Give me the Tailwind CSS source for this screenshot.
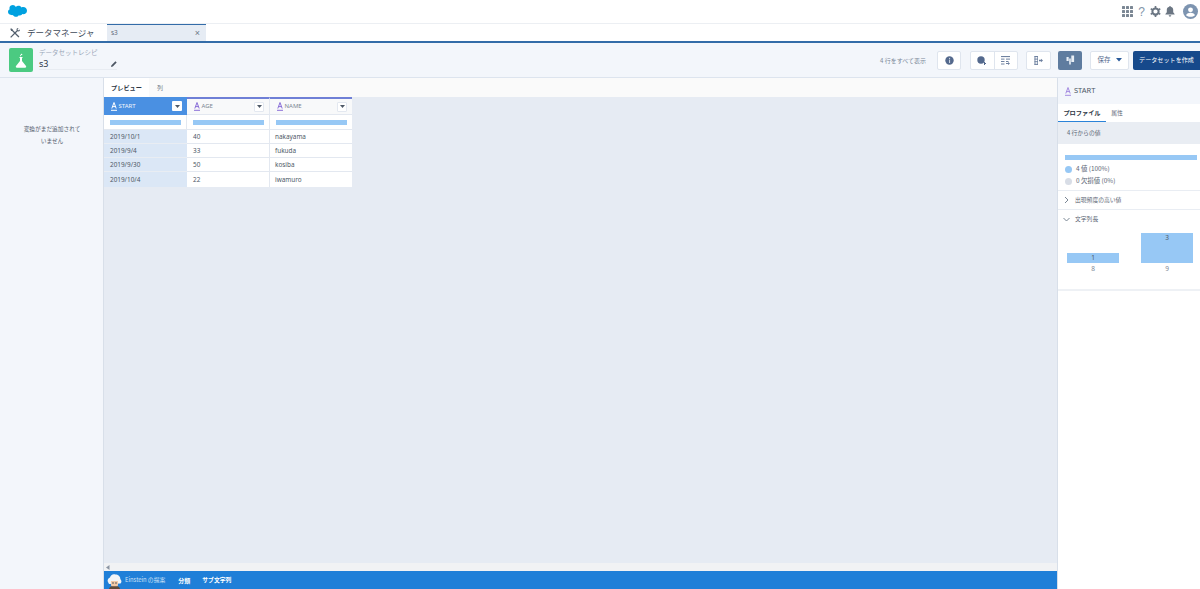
<!DOCTYPE html>
<html lang="ja">
<head>
<meta charset="utf-8">
<script src="https://cdn.jsdelivr.net/npm/@tailwindcss/browser@4"></script>
</head>
<body class="m-0 overflow-hidden bg-white font-['Noto_Sans_CJK_JP','Noto_Sans',sans-serif]">
<div class="flex h-[589px] w-[1200px] flex-col">
  <!-- global bar -->
  <header class="flex h-[24px] shrink-0 items-center justify-between border-b border-[#eceff3] bg-white pl-[8px] pr-[2px]">
    <svg width="19" height="13" viewBox="0 0 20 15" preserveAspectRatio="none"><path fill="#00a1e0" d="M8.200 2.200C8.900 1.300 9.900.8 11 .8c1.400 0 2.700.8 3.300 2 .6-.2 1.100-.4 1.700-.4 2.200 0 4 1.800 4 4.100s-1.800 4.100-4 4.100c-.3 0-.5 0-.8-.1-.5.9-1.500 1.500-2.600 1.500-.5 0-.9-.1-1.300-.3-.5 1.200-1.700 2-3 2-1.400 0-2.600-.9-3.100-2.100-.2 0-.4.100-.7.100C1.800 11.700 0 10.100 0 8.100c0-1.300.7-2.500 1.800-3.100-.2-.5-.3-1-.3-1.600C1.500 1.500 3.300 0 5.200 0c1.200 0 2.200.8 3 2.200z"/></svg>
    <div class="flex items-center">
      <svg class="mr-[5px]" width="11" height="11" viewBox="0 0 11 11" fill="#7b8794"><rect width="3" height="3" rx=".5"/><rect x="4" width="3" height="3" rx=".5"/><rect x="8" width="3" height="3" rx=".5"/><rect y="4" width="3" height="3" rx=".5"/><rect x="4" y="4" width="3" height="3" rx=".5"/><rect x="8" y="4" width="3" height="3" rx=".5"/><rect y="8" width="3" height="3" rx=".5"/><rect x="4" y="8" width="3" height="3" rx=".5"/><rect x="8" y="8" width="3" height="3" rx=".5"/></svg>
      <span class="mr-[5px] w-[7px] text-center font-['Liberation_Sans'] text-[12px] leading-[12px] text-[#8496ab]">?</span>
      <svg class="mr-[4px]" width="11" height="11" viewBox="0 0 12 12"><circle cx="6" cy="6" r="3.400" fill="none" stroke="#6b7683" stroke-width="2.200"/><path stroke="#6b7683" stroke-width="1.800" d="M6 0v2.400M6 9.600V12M.8 3l2.100 1.200M9.100 7.800 11.200 9M.8 9l2.100-1.200M9.100 4.200 11.200 3"/></svg>
      <svg class="mr-[8px]" width="10" height="11" viewBox="0 0 10 11" fill="#6b7683"><path d="M5 0c.5 0 .8.300.8.700C7.300 1 8.200 2.200 8.200 3.800v2.400L9.600 8v.6H.4V8l1.400-1.800V3.800C1.800 2.200 2.700 1 4.200.7 4.200.3 4.500 0 5 0zM3.700 9.300h2.600C6.200 10.200 5.700 10.700 5 10.700s-1.200-.5-1.300-1.400z"/></svg>
      <svg width="15" height="15" viewBox="0 0 16 16"><circle cx="8" cy="8" r="8" fill="#7d94b0"/><circle cx="8" cy="6.200" r="2.600" fill="#fff"/><path fill="#fff" d="M3.400 12.300c0-2 2-3 4.600-3s4.600 1 4.600 3c-1.200.9-2.800 1.300-4.600 1.300s-3.400-.4-4.600-1.300z"/></svg>
    </div>
  </header>

  <!-- app tabs -->
  <nav class="flex h-[19px] shrink-0 items-stretch border-b-2 border-[#336ca8] bg-white">
    <div class="flex w-[107px] items-center pl-[10px]">
      <svg class="mr-[7px] shrink-0" width="10" height="10" viewBox="0 0 10 10" fill="#54606e"><path d="M.2 8.900 6.800 2.300 6.400 1 7.800 0 8.500.6 7.400 1.700l.9.9 1.100-1.100.6.700-1 1.400-1.300-.4-6.600 6.600z"/><path d="M.3 1 1 .3l1.700 1 .1.800 6.600 6.500-.9.900L2 3.100l-.8-.1z"/></svg>
      <span class="text-[8.500px] leading-none whitespace-nowrap text-[#3e4958]">データマネージャ</span>
    </div>
    <div class="flex w-[99px] items-center justify-between border-t-[1.500px] border-[#336ca8] bg-[#e6ecf4] pl-[4px] pr-[6px]">
      <span class="font-['Noto_Sans'] text-[6.500px] text-[#5c6877]">s3</span>
      <span class="font-['Liberation_Sans'] text-[9px] leading-none text-[#6f7a88]">×</span>
    </div>
  </nav>

  <!-- page header -->
  <section class="flex h-[35px] shrink-0 items-center justify-between border-b border-[#dde4ee] bg-[#f3f6fb] pl-[9px]">
    <div class="flex items-center">
      <div class="flex h-[24px] w-[24px] items-center justify-center rounded-[2px] bg-[#4bca81]">
        <svg width="12" height="15" viewBox="0 0 12 15" fill="#fff"><path d="M4.500 4h3v.9h-.500v3.200L11 13c.5.800 0 1.700-.9 1.700H1.900C1 14.700.5 13.800 1 13l4-4.900V4.900h-.500z"/><circle cx="6.500" cy="1.500" r=".8"/><rect x="5" y="2.200" width="1" height="1"/></svg>
      </div>
      <div class="mb-[3px] ml-[6px] w-[78px] border-b border-[#e8ecf2]">
        <div class="text-[6.500px] leading-[11px] whitespace-nowrap text-[#9aa6b8]">データセットレシピ</div>
        <div class="flex h-[11px] items-center justify-between">
          <span class="font-['Noto_Sans'] text-[9px] leading-none text-[#2c3645]">s3</span>
          <svg width="6" height="6" viewBox="0 0 6 6" fill="#4c5663"><path d="M4.400.3 5.700 1.600 1.800 5.500 0 6 .5 4.200z"/></svg>
        </div>
      </div>
    </div>
    <div class="flex items-center">
      <span class="mr-[11px] text-[6px] whitespace-nowrap text-[#7b8899]">4 行をすべて表示</span>
      <div class="mr-[9px] flex h-[19px] w-[24px] items-center justify-center rounded-[2px] border border-[#dfe5ee] bg-white">
        <svg width="9" height="9" viewBox="0 0 9 9"><circle cx="4.500" cy="4.500" r="4.200" fill="#54698d"/><rect x="4" y="1.900" width="1.100" height="1.100" fill="#c9d3e0"/><rect x="4" y="3.600" width="1.100" height="3.400" fill="#c9d3e0"/></svg>
      </div>
      <div class="mr-[8px] flex h-[19px] w-[48px] rounded-[2px] border border-[#dfe5ee] bg-white">
        <div class="flex flex-1 items-center justify-center border-r border-[#dfe5ee]">
          <svg width="10" height="9" viewBox="0 0 10 9" fill="#54698d"><circle cx="4" cy="4" r="3.700"/><path d="M7 6h1v1h1v1H8v1H7z"/></svg>
        </div>
        <div class="flex flex-1 items-center justify-center">
          <svg width="9" height="9" viewBox="0 0 9 9" fill="#6e81a0"><rect width="9" height="1.100"/><rect y="2.600" width="3.500" height="1"/><rect x="5" y="2.600" width="4" height="1"/><rect y="5" width="3.500" height="1"/><rect x="5" y="5" width="2.500" height="1"/><rect y="7.500" width="3.500" height="1"/><path d="M5 7h2V6l2 1.500L7 9V8H5z"/></svg>
        </div>
      </div>
      <div class="mr-[7px] flex h-[19px] w-[25px] items-center justify-center rounded-[2px] border border-[#dfe5ee] bg-white">
        <svg width="9" height="9" viewBox="0 0 9 9" fill="#6e81a0"><rect x=".5" width="3.500" height="1.100"/><rect x=".5" y="2.600" width="3.500" height="1"/><rect x=".5" y="5.200" width="3.500" height="1"/><rect x=".5" y="7.800" width="3.500" height="1.100"/><rect x=".5" width=".9" height="9"/><rect x="3.300" width=".7" height="9"/><path d="M5 3.800h2V2.800l2 1.700-2 1.700v-1H5z"/></svg>
      </div>
      <div class="mr-[8px] flex h-[19px] w-[24px] items-center justify-center rounded-[2px] bg-[#5f7c9f]">
        <svg width="9" height="10" viewBox="0 0 9 10" fill="#e8eef5"><rect x="0.500" y="2" width="2.200" height="4"/><rect x="3.200" y="3.500" width="1.600" height="6"/><rect x="5.300" y="0.500" width="2.800" height="6.500"/></svg>
      </div>
      <div class="mr-[4px] flex h-[19px] w-[39px] items-center justify-center gap-[5px] rounded-[2px] border border-[#dfe5ee] bg-white">
        <span class="text-[6.500px] text-[#54698d]">保存</span>
        <svg width="6" height="4" viewBox="0 0 6 4" fill="#2a5a9a"><path d="M0 0h6L3 3.500z"/></svg>
      </div>
      <div class="flex h-[19px] w-[67px] items-center justify-center rounded-l-[2px] bg-[#16498b]">
        <span class="text-[6.100px] whitespace-nowrap text-white">データセットを作成</span>
      </div>
    </div>
  </section>

  <!-- main -->
  <main class="flex min-h-0 flex-1">
    <aside class="w-[104px] shrink-0 border-r border-[#d8dfe9] bg-[#f3f6fb] pt-[45px] text-center text-[5.700px] leading-[12px] text-[#55606e]">
      <p class="m-0 pl-[1px]">変換がまだ追加されて<br>いません</p>
    </aside>

    <div class="flex min-w-0 flex-1 flex-col bg-[#e6ebf3]">
      <div class="flex h-[19px] shrink-0 bg-[#fafafa]">
        <div class="flex w-[45px] items-center justify-center bg-white text-[6.200px] font-bold text-[#2c3645]">プレビュー</div>
        <div class="flex w-[22px] items-center justify-center text-[6px] text-[#6f7a88]">列</div>
      </div>

      <div class="min-h-0 flex-1">
        <div class="grid w-[248px] grid-cols-[83px_83px_82px] font-['Noto_Sans'] text-[6.400px] text-[#4e5967]">
          <div class="flex h-[18px] items-center justify-between bg-[#4a90e2] pl-[7px] pr-[5px] text-[#f2f6fc]">
            <span class="flex items-center gap-[1.500px] text-[6px]"><svg width="6" height="9" viewBox="0 0 6 9"><path d="M.8 6.500 3 .5l2.200 6M1.500 4.600h3" fill="none" stroke="#fff"/><rect y="7.800" width="6" height="1" fill="#fff"/></svg><span class="pt-[1px]">START</span></span>
            <span class="flex h-[10px] w-[10px] items-center justify-center rounded-[1px] bg-white"><svg width="5" height="3" viewBox="0 0 5 3" fill="#4e5967"><path d="M0 0h5L2.500 3z"/></svg></span>
          </div>
          <div class="flex h-[18px] items-center justify-between border-t-2 border-r border-b border-t-[#6f7fd6] border-r-[#e3e8f0] border-b-[#e3e8f0] bg-[#f8f9fa] pl-[7px] pr-[5px] text-[#7c8794]">
            <span class="flex items-center gap-[1.500px] text-[6px]"><svg width="6" height="9" viewBox="0 0 6 9"><path d="M.8 6.500 3 .5l2.200 6M1.500 4.600h3" fill="none" stroke="#8a6fd8"/><rect y="7.800" width="6" height="1" fill="#8a6fd8"/></svg><span>AGE</span></span>
            <span class="flex h-[10px] w-[10px] items-center justify-center rounded-[1px] border border-[#e3e8f0] bg-white"><svg width="5" height="3" viewBox="0 0 5 3" fill="#4e5967"><path d="M0 0h5L2.500 3z"/></svg></span>
          </div>
          <div class="flex h-[18px] items-center justify-between border-t-2 border-b border-t-[#6f7fd6] border-b-[#e3e8f0] bg-[#f8f9fa] pl-[7px] pr-[5px] text-[#7c8794]">
            <span class="flex items-center gap-[1.500px] text-[6px]"><svg width="6" height="9" viewBox="0 0 6 9"><path d="M.8 6.500 3 .5l2.200 6M1.500 4.600h3" fill="none" stroke="#8a6fd8"/><rect y="7.800" width="6" height="1" fill="#8a6fd8"/></svg><span>NAME</span></span>
            <span class="flex h-[10px] w-[10px] items-center justify-center rounded-[1px] border border-[#e3e8f0] bg-white"><svg width="5" height="3" viewBox="0 0 5 3" fill="#4e5967"><path d="M0 0h5L2.500 3z"/></svg></span>
          </div>

          <div class="flex h-[15px] items-center justify-center border-r border-b border-[#e3e8f0] bg-white"><div class="h-[5px] w-[71px] bg-[#97c8f5]"></div></div>
          <div class="flex h-[15px] items-center justify-center border-r border-b border-[#e3e8f0] bg-white"><div class="h-[5px] w-[71px] bg-[#97c8f5]"></div></div>
          <div class="flex h-[15px] items-center justify-center border-b border-[#e3e8f0] bg-white"><div class="h-[5px] w-[71px] bg-[#97c8f5]"></div></div>

          <div class="flex h-[14px] items-center border-b border-[#e9edf3] bg-[#dbe7f6] pl-[6px] pt-[1px]">2019/10/1</div>
          <div class="flex h-[14px] items-center border-r border-b border-[#e3e8f0] bg-white pl-[6px] pt-[1px]">40</div>
          <div class="flex h-[14px] items-center border-b border-[#e3e8f0] bg-white pl-[5px] pt-[1px]">nakayama</div>

          <div class="flex h-[14px] items-center border-b border-[#e9edf3] bg-[#dbe7f6] pl-[6px] pt-[1px]">2019/9/4</div>
          <div class="flex h-[14px] items-center border-r border-b border-[#e3e8f0] bg-white pl-[6px] pt-[1px]">33</div>
          <div class="flex h-[14px] items-center border-b border-[#e3e8f0] bg-white pl-[5px] pt-[1px]">fukuda</div>

          <div class="flex h-[14px] items-center border-b border-[#e9edf3] bg-[#dbe7f6] pl-[6px] pt-[1px]">2019/9/30</div>
          <div class="flex h-[14px] items-center border-r border-b border-[#e3e8f0] bg-white pl-[6px] pt-[1px]">50</div>
          <div class="flex h-[14px] items-center border-b border-[#e3e8f0] bg-white pl-[5px] pt-[1px]">kosiba</div>

          <div class="flex h-[15px] items-center bg-[#dbe7f6] pl-[6px]">2019/10/4</div>
          <div class="flex h-[15px] items-center border-r border-[#e3e8f0] bg-white pl-[6px]">22</div>
          <div class="flex h-[15px] items-center bg-white pl-[5px]">iwamuro</div>
        </div>
      </div>

      <div class="flex h-[8px] shrink-0 items-center bg-[#f1f2f4] pl-[2px]">
        <svg width="4" height="5" viewBox="0 0 4 5" fill="#8b95a3"><path d="M3.500 0v5L0 2.500z"/></svg>
      </div>
      <footer class="flex h-[18px] shrink-0 items-center bg-[#1f7fd8] text-white">
        <svg class="ml-[3px] mr-[3px] self-end" width="15" height="16" viewBox="0 0 15 16"><path fill="#f2f4f6" d="M1 9C0 7 1.500 5 3 4.500 3.500 2 6 .5 8.500 1.500c2.500 0 5 2 4.800 4.500 1.500 1.500 1.500 3.500.2 4.500L2 11z"/><path fill="#f1c9a8" d="M4 8h7v4c0 1.500-1.500 2.500-3.500 2.500S4 13.500 4 12z"/><circle cx="6" cy="10" r=".7" fill="#26323f"/><circle cx="9" cy="10" r=".7" fill="#26323f"/><path fill="#5e4a3b" d="M2 16c.5-1.800 1.500-2.500 3-2.700h5c1.500.2 2.500 1 3 2.700z"/></svg>
        <span class="mr-[13px] text-[5.800px] whitespace-nowrap text-[#cfe2f7]">Einstein の提案</span>
        <span class="mr-[12px] text-[6px] font-bold whitespace-nowrap">分類</span>
        <span class="text-[5.800px] font-bold whitespace-nowrap">サブ文字列</span>
      </footer>
    </div>

    <aside class="flex w-[143px] shrink-0 flex-col border-l border-[#d8dfe9] bg-white text-[5.800px] text-[#5a6574]">
      <div class="flex h-[26px] shrink-0 items-center gap-[3px] bg-[#f3f6fb] pl-[7px] font-['Noto_Sans'] text-[7.500px] text-[#4e5967]">
        <svg width="6" height="9" viewBox="0 0 6 9"><path d="M.8 6.500 3 .5l2.200 6M1.500 4.600h3" fill="none" stroke="#a48be0"/><rect y="7.800" width="6" height="1" fill="#a48be0"/></svg>START
      </div>
      <div class="flex h-[18px] shrink-0">
        <div class="flex w-[48px] items-center justify-center border-b-[1.500px] border-[#2b83d8] text-[6.200px] font-bold text-[#2c3645]">プロファイル</div>
        <div class="flex w-[22px] items-center justify-center">属性</div>
      </div>
      <div class="flex h-[22px] shrink-0 items-center bg-[#e9edf3] pl-[9px]">4 行からの値</div>
      <div class="mt-[11px] ml-[7px] h-[5px] w-[132px] shrink-0 bg-[#97c8f5]"></div>
      <div class="mt-[3px] ml-[7px] flex h-[12px] shrink-0 items-center gap-[4px] text-[6.400px]"><span class="h-[7px] w-[7px] rounded-full bg-[#97c8f5]"></span>4 値 (100%)</div>
      <div class="ml-[7px] flex h-[12px] shrink-0 items-center gap-[4px] text-[6.400px]"><span class="h-[7px] w-[7px] rounded-full bg-[#d8dde6]"></span>0 欠損値 (0%)</div>
      <div class="mt-[3px] flex h-[20px] shrink-0 items-center gap-[6px] border-t border-b border-[#e9edf3] pl-[6px]">
        <svg width="5" height="8" viewBox="0 0 5 8" fill="none" stroke="#7b8794"><path d="m1 1 3 3-3 3"/></svg>出現頻度の高い値
      </div>
      <div class="h-[81px] shrink-0 border-b-2 border-[#eef1f5]">
        <div class="flex h-[18px] items-center gap-[5px] pl-[5px]">
          <svg width="7" height="5" viewBox="0 0 7 5" fill="none" stroke="#7b8794"><path d="m.5 1 3 3 3-3"/></svg>文字列長
        </div>
        <div class="mt-[5px] grid h-[30px] grid-cols-[52px_52px] items-end justify-between pr-[7px] pl-[9px] font-['Noto_Sans'] text-[6.500px] text-[#4e5967]">
          <div class="flex h-[10px] items-center justify-center bg-[#97c8f5]">1</div>
          <div class="h-[30px] bg-[#97c8f5] pt-[1px] text-center leading-[8px]">3</div>
        </div>
        <div class="mt-[1px] grid h-[10px] grid-cols-[52px_52px] items-center justify-between pr-[7px] pl-[9px] text-center font-['Noto_Sans'] text-[6.500px] text-[#7b8794]">
          <span>8</span><span>9</span>
        </div>
      </div>
    </aside>
  </main>
</div>
</body>
</html>
